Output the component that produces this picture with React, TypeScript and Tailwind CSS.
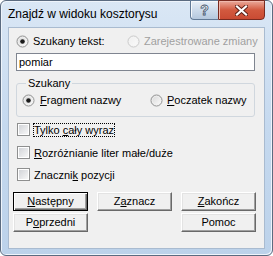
const font = "font-['Liberation_Sans',Arial,sans-serif]";

function Radio({ checked = false, disabled = false }: { checked?: boolean; disabled?: boolean }) {
  return (
    <svg width="13" height="13" viewBox="0 0 13 13" className="shrink-0">
      <defs>
        <linearGradient id={disabled ? "rgd" : "rg"} x1="0" y1="0" x2="1" y2="1">
          <stop offset="0" stopColor={disabled ? "#eeeeee" : "#d4d4d4"} />
          <stop offset="1" stopColor={disabled ? "#fbfbfb" : "#ffffff"} />
        </linearGradient>
      </defs>
      <circle cx="6.5" cy="6.5" r="5.5" fill={`url(#${disabled ? "rgd" : "rg"})`} stroke={disabled ? "#c9c9c9" : "#8e8f8f"} />
      <circle cx="6.5" cy="6.5" r="4.3" fill="none" stroke={disabled ? "#f4f4f4" : "#f0f0f0"} strokeWidth="0.8" />
      {checked && <circle cx="6.5" cy="6.5" r="2.3" fill="#1b1b1b" />}
    </svg>
  );
}

function Check() {
  return (
    <div className="h-[13px] w-[13px] shrink-0 border border-[#8e8f8f] bg-white p-px">
      <div className="h-full w-full bg-gradient-to-br from-[#d2d4d8] to-[#f7f7f7]" />
    </div>
  );
}

function Btn({ children, def = false }: { children: React.ReactNode; def?: boolean }) {
  return (
    <div
      className={
        def
          ? "flex h-[19px] w-[75px] items-center justify-center border border-black bg-[#f0f0f0] shadow-[inset_1px_1px_0_#fff,inset_-1px_-1px_0_#696969,inset_-2px_-2px_0_#a0a0a0] text-[11px] leading-[13px] text-black"
          : "flex h-[19px] w-[75px] items-center justify-center border border-t-white border-l-white border-r-[#696969] border-b-[#696969] bg-[#f0f0f0] shadow-[inset_-1px_-1px_0_#a0a0a0,inset_1px_1px_0_#e3e3e3] text-[11px] leading-[13px] text-black"
      }
    >
      {children}
    </div>
  );
}

export default function App() {
  return (
    <div className={`${font} relative h-[256px] w-[273px] rounded-[6px] border border-[#5b6b80] bg-gradient-to-b from-[#dae7f5] via-[#c5d9ef] to-[#bcd2ea] shadow-[inset_1px_1px_0_#eef4fb,inset_-1px_-1px_0_#eef4fb]`}>
      {/* caption buttons */}
      <div className="absolute -top-px right-[7px] flex h-[20px]">
        <div className="flex w-[28px] items-center justify-center rounded-bl-[4px] border border-r-0 border-[#627a96] bg-gradient-to-b from-[#e9f0f8] via-[#cddbeb] to-[#b5c8de] shadow-[inset_1px_1px_0_#f6f9fc]">
          <span className="text-[14px] font-bold leading-[14px] text-white [-webkit-text-stroke:0.8px_#43546b]">?</span>
        </div>
        <div className="flex w-[47px] items-center justify-center rounded-br-[4px] border border-[#7a2a1f] bg-gradient-to-b from-[#e9a99b] via-[#d2593f] to-[#c94b33] shadow-[inset_1px_1px_0_#f0b9ad]">
          <svg width="13" height="11" viewBox="0 0 13 11">
            <path d="M2 1.5 L11 9.5 M11 1.5 L2 9.5" stroke="#5a1e16" strokeWidth="4" strokeLinecap="square" />
            <path d="M2 1.5 L11 9.5 M11 1.5 L2 9.5" stroke="#ffffff" strokeWidth="2.2" strokeLinecap="square" />
          </svg>
        </div>
      </div>

      {/* title */}
      <div className="h-[26px] pl-[7px] pt-[6px] text-[12px] leading-[15px] text-black">Znajdź w widoku kosztorysu</div>

      {/* client area */}
      <div className="mx-[7px] h-[222px] border border-[#a9bbd0] bg-[#f0f0f0] pl-[4px] pt-[7px] text-[11px] leading-[13px] text-black">
        <div className="ml-[3px] flex h-[13px] items-center">
          <div className="flex w-[111px] items-center gap-[4px]">
            <Radio checked />
            <span>Szukany tekst:</span>
          </div>
          <div className="flex items-center gap-[4px] text-[#a0a0a0]">
            <Radio disabled />
            <span>Zarejestrowane zmiany</span>
          </div>
        </div>

        <div className="ml-[3px] mt-[5px] flex h-[18px] w-[239px] items-center border border-[#7f8590] bg-white pl-[2px]">
          pomiar
        </div>

        <fieldset className="ml-[3px] mt-[6px] w-[239px] rounded-[3px] border border-[#d0d7de] pb-[9px] pl-[5px] pt-[5px]">
          <legend className="ml-[4px] px-[2px] leading-[12px]">Szukany</legend>
          <div className="flex h-[13px] items-center">
            <div className="flex w-[128px] items-center gap-[5px]">
              <Radio checked />
              <span><u>F</u>ragment nazwy</span>
            </div>
            <div className="flex items-center gap-[4px]">
              <Radio />
              <span><u>P</u>oczatek nazwy</span>
            </div>
          </div>
        </fieldset>

        <div className="ml-[4px] mt-[6px] flex h-[14px] items-start gap-[3px]">
          <Check />
          <span className="border border-dotted border-black leading-[12px]">Tylko <u>c</u>ały wyraz</span>
        </div>
        <div className="ml-[4px] mt-[9px] flex h-[14px] items-start gap-[3px]">
          <Check />
          <span className="border border-transparent leading-[12px]"><u>R</u>ozróżnianie liter małe/duże</span>
        </div>
        <div className="ml-[4px] mt-[8px] flex h-[14px] items-start gap-[3px]">
          <Check />
          <span className="border border-transparent leading-[12px]">Znaczni<u>k</u> pozycji</span>
        </div>

        <div className="mt-[10px] grid grid-cols-[75px_75px_75px] gap-x-[9px] gap-y-[2px]">
          <Btn def><u>N</u>astępny</Btn>
          <Btn>Z<u>a</u>znacz</Btn>
          <Btn><u>Z</u>akończ</Btn>
          <Btn>P<u>o</u>przedni</Btn>
          <div />
          <Btn>Pomoc</Btn>
        </div>
      </div>
    </div>
  );
}
